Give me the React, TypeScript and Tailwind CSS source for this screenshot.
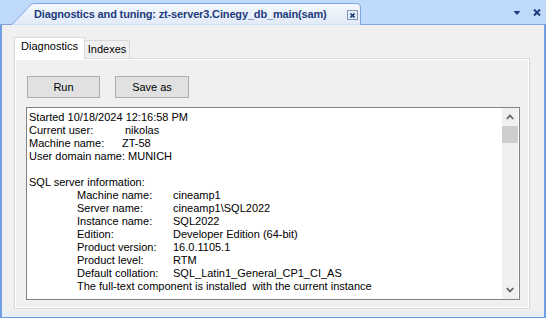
import React from "react";

type Line = { label?: string; value?: string; indent?: boolean; lw?: number; raw?: string };

const lines: Line[] = [
  { raw: "Started 10/18/2024 12:16:58 PM" },
  { label: "Current user:", value: "nikolas" },
  { label: "Machine name:", value: "ZT-58", lw: 93 },
  { raw: "User domain name: MUNICH" },
  { raw: "" },
  { raw: "SQL server information:" },
  { label: "Machine name:", value: "cineamp1", indent: true },
  { label: "Server name:", value: "cineamp1\\SQL2022", indent: true },
  { label: "Instance name:", value: "SQL2022", indent: true },
  { label: "Edition:", value: "Developer Edition (64-bit)", indent: true },
  { label: "Product version:", value: "16.0.1105.1", indent: true },
  { label: "Product level:", value: "RTM", indent: true },
  { label: "Default collation:", value: "SQL_Latin1_General_CP1_CI_AS", indent: true },
  { raw: "The full-text component is installed  with the current instance", indent: true },
];

const OutputLine: React.FC<{ line: Line }> = ({ line }) => (
  <div className={`flex h-[13px] whitespace-pre ${line.indent ? "pl-[48px]" : ""}`}>
    {line.raw !== undefined ? (
      <span>{line.raw}</span>
    ) : (
      <>
        <span className="shrink-0" style={{ width: line.lw ?? 96 }}>
          {line.label}
        </span>
        <span>{line.value}</span>
      </>
    )}
  </div>
);

export default function App() {
  return (
    <div className="w-[546px] h-[318px] flex flex-col bg-[#bfdafb] font-['Liberation_Sans',Arial,sans-serif] text-[11px] leading-[13px] text-black overflow-hidden">
      {/* Document tab strip */}
      <div className="flex h-[25px] shrink-0">
        <div className="relative w-[362px] h-[25px] flex items-start justify-between">
          <svg className="absolute inset-0" width="362" height="25" viewBox="0 0 362 25">
            <defs>
              <linearGradient id="tabfill" x1="0" y1="0" x2="0" y2="1">
                <stop offset="0" stopColor="#f5f8fd" />
                <stop offset="1" stopColor="#e1eaf8" />
              </linearGradient>
            </defs>
            <path
              d="M0 24.5 H12 L30.5 5 Q32 3.5 35 3.5 H356 Q360.5 3.5 360.5 8 V24.5 H362"
              fill="url(#tabfill)"
              stroke="#7ea5de"
            />
          </svg>
          <span className="relative pl-[34px] pt-[8px] font-bold text-[#1d3c7c] tracking-[-0.15px] whitespace-pre">
            Diagnostics and tuning: zt-server3.Cinegy_db_main(sam)
          </span>
          <span className="relative mt-[10px] mr-[4px] w-[11px] h-[10px] border border-[#7f95bb] bg-[#e4ecf8] flex items-center justify-center">
            <svg width="5" height="5" viewBox="0 0 5 5">
              <path d="M0.5 0.5 L4.5 4.5 M4.5 0.5 L0.5 4.5" stroke="#1d3c7c" strokeWidth="1.6" />
            </svg>
          </span>
        </div>
        <div className="flex-1 h-[25px] border-b border-[#7ea5de] flex items-start justify-end gap-[12px] pt-[9px] pr-[5px]">
          <svg width="8" height="7" viewBox="0 0 8 7" className="mt-[1px]">
            <path d="M0.5 1 H7.5 L4 5 Z" fill="#1d3c7c" />
          </svg>
          <svg width="8" height="7" viewBox="0 0 8 7">
            <path d="M1 0.5 L7 6.5 M7 0.5 L1 6.5" stroke="#1d3c7c" strokeWidth="2" />
          </svg>
        </div>
      </div>

      {/* Window body */}
      <div className="flex-1 flex flex-col bg-[#f0f0f0] border-l-2 border-r-2 border-b border-[#6f9ee3]">
        <div className="pl-[12px] pt-[12px]">
          {/* Inner tabs */}
          <div className="flex items-end h-[22px] -mb-px relative z-10">
            <div className="w-[71px] h-[22px] bg-white border border-b-0 border-[#d9d9d9] pt-[2px] text-center">
              Diagnostics
            </div>
            <div className="w-[45px] h-[18px] bg-[#f0f0f0] border-t border-r border-[#d9d9d9] pt-[2px] mb-px text-center">
              Indexes
            </div>
          </div>

          {/* Tab page */}
          <div className="w-[516px] h-[251px] border border-[#d9d9d9] shadow-[inset_0_0_0_1px_#ffffff] pl-[12px] pt-[17px]">
            <div className="flex gap-[15px]">
              <button className="w-[73px] h-[22px] bg-[#e1e1e1] border border-[#adadad] text-center">Run</button>
              <button className="w-[74px] h-[22px] bg-[#e1e1e1] border border-[#adadad] text-center">Save as</button>
            </div>

            {/* Output box */}
            <div className="mt-[9px] -ml-px w-[494px] h-[193px] border border-[#828282] bg-white flex">
              <div className="flex-1 pl-[2px] pt-[3px] overflow-hidden">
                {lines.map((l, i) => (
                  <OutputLine key={i} line={l} />
                ))}
              </div>
              <div className="w-[16px] mr-[1px] bg-[#f0f0f0] flex flex-col">
                <div className="h-[18px] flex items-center justify-center">
                  <svg width="8" height="6" viewBox="0 0 8 6">
                    <path d="M0.8 5 L4 1.5 L7.2 5" fill="none" stroke="#606060" strokeWidth="1.8" />
                  </svg>
                </div>
                <div className="h-[17px] bg-[#cdcdcd]" />
                <div className="flex-1" />
                <div className="h-[18px] flex items-center justify-center">
                  <svg width="8" height="6" viewBox="0 0 8 6">
                    <path d="M0.8 1 L4 4.5 L7.2 1" fill="none" stroke="#606060" strokeWidth="1.8" />
                  </svg>
                </div>
              </div>
            </div>
          </div>
        </div>
        <div className="mt-auto h-[6px] bg-[#e8eef8]" />
      </div>
    </div>
  );
}
